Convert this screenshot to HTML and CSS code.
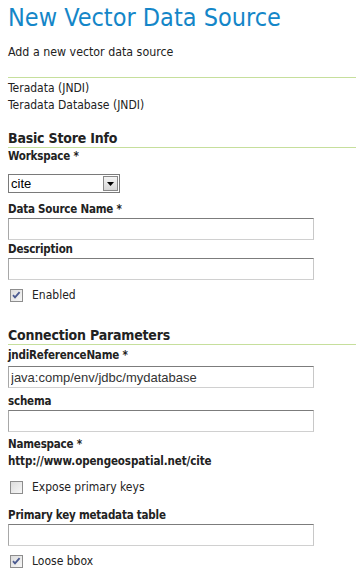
FILE: index.html
```html
<!DOCTYPE html>
<html>
<head>
<meta charset="utf-8">
<link rel="stylesheet" href="styles.css">
</head>
<body>
<h1 class="title">New Vector Data Source</h1>
<p class="sub">Add a new vector data source</p>
<div class="types">
  <div class="type">Teradata (JNDI)</div>
  <div class="type">Teradata Database (JNDI)</div>
</div>

<h3 class="section s1">Basic Store Info</h3>
<label class="lbl l-ws">Workspace *</label>
<div class="select">
  <span class="sel-val">cite</span>
  <span class="sel-btn"><svg width="7" height="4" viewBox="0 0 7 4"><path d="M0 0h7L3.5 4z" fill="#000"/></svg></span>
</div>
<label class="lbl l-dsn">Data Source Name *</label>
<input class="txt" type="text">
<label class="lbl l-desc">Description</label>
<input class="txt" type="text">
<div class="check c-enabled">
  <span class="cb"><svg width="13" height="13" viewBox="0 0 13 13"><path d="M3 6.2l2 2.2 4.6-5.2" fill="none" stroke="#4a5a90" stroke-width="1.8"/></svg></span>
  <span>Enabled</span>
</div>

<h3 class="section s2">Connection Parameters</h3>
<label class="lbl l-jndi">jndiReferenceName *</label>
<input class="txt t-jndi" type="text" value="java:comp/env/jdbc/mydatabase">
<label class="lbl l-schema">schema</label>
<input class="txt" type="text">
<label class="lbl l-ns">Namespace *</label>
<div class="ns-val">http://www.opengeospatial.net/cite</div>
<div class="check c-expose">
  <span class="cb"></span>
  <span>Expose primary keys</span>
</div>
<label class="lbl l-pk">Primary key metadata table</label>
<input class="txt" type="text">
<div class="check c-loose">
  <span class="cb"><svg width="13" height="13" viewBox="0 0 13 13"><path d="M3 6.2l2 2.2 4.6-5.2" fill="none" stroke="#4a5a90" stroke-width="1.8"/></svg></span>
  <span>Loose bbox</span>
</div>
</body>
</html>
```

FILE: styles.css
```css
html, body {
  margin: 0;
  padding: 0;
  background: #fff;
}
body {
  padding-left: 8px;
  font-family: "DejaVu Sans Condensed", "DejaVu Sans", sans-serif;
  font-size: 12px;
  color: #222;
}
.title {
  margin: 3px 0 0;
  font-size: 25px;
  line-height: 30px;
  font-weight: normal;
  color: #1486c8;
}
.sub {
  margin: 11px 0 0;
  line-height: 17px;
  font-size: 12.3px;
}
.types {
  margin-top: 16px;
  border-top: 1px solid #c6df9c;
  padding-top: 2px;
}
.type {
  line-height: 17px;
}
.section {
  margin: 0;
  font-size: 14px;
  letter-spacing: -0.2px;
  line-height: 18px;
  font-weight: bold;
  border-bottom: 1px solid #c6df9c;
}
.s1 { margin-top: 15px; }
.s2 { margin-top: 23px; }
.lbl {
  display: block;
  font-weight: bold;
  font-size: 11.5px;
  letter-spacing: -0.2px;
  line-height: 16px;
}
.select {
  display: flex;
  width: 112px;
  height: 19px;
  box-sizing: border-box;
  border: 1px solid #7a7a7a;
  margin-top: 10px;
  background: #fff;
}
.sel-val {
  flex: 1;
  font-family: "Liberation Sans", Arial, sans-serif;
  font-size: 13px;
  line-height: 17px;
  padding-left: 2px;
  color: #000;
}
.sel-btn {
  width: 15px;
  margin: 1px;
  box-sizing: border-box;
  border: 1px solid #888;
  background: linear-gradient(#f4f4f4, #d6d6d6);
  display: flex;
  align-items: center;
  justify-content: center;
}
.l-dsn { margin-top: 8px; }
.l-desc { margin-top: 1px; }
.txt {
  display: block;
  width: 306px;
  height: 22px;
  box-sizing: border-box;
  margin: 1px 0 0;
  padding: 0 2px;
  border: 1px solid;
  border-color: #7c7c7c #c8c8c8 #d0d0d0 #a8a8a8;
  font-family: "Liberation Sans", Arial, sans-serif;
  font-size: 13px;
  color: #333;
  background: #fff;
  outline: none;
}
.check {
  display: flex;
  align-items: center;
  line-height: 16px;
  font-size: 12px;
}
.cb {
  width: 13px;
  height: 13px;
  box-sizing: border-box;
  margin-left: 2px;
  margin-right: 9px;
  border: 1px solid #8d8d8d;
  background: linear-gradient(135deg, #dcdcdc, #f7f7f7);
  position: relative;
}
.cb svg {
  position: absolute;
  left: -1px;
  top: -1px;
}
.c-enabled { margin-top: 7px; }
.l-jndi { margin-top: 2px; }
.t-jndi { margin-top: 3px; }
.l-schema { margin-top: 5px; }
.l-ns { margin-top: 4px; }
.ns-val {
  font-weight: bold;
  font-size: 11.5px;
  letter-spacing: -0.1px;
  line-height: 17px;
  margin-top: 1px;
}
.c-expose { margin-top: 9px; }
.l-pk { margin-top: 12px; }
.c-loose { margin-top: 7px; }
```
